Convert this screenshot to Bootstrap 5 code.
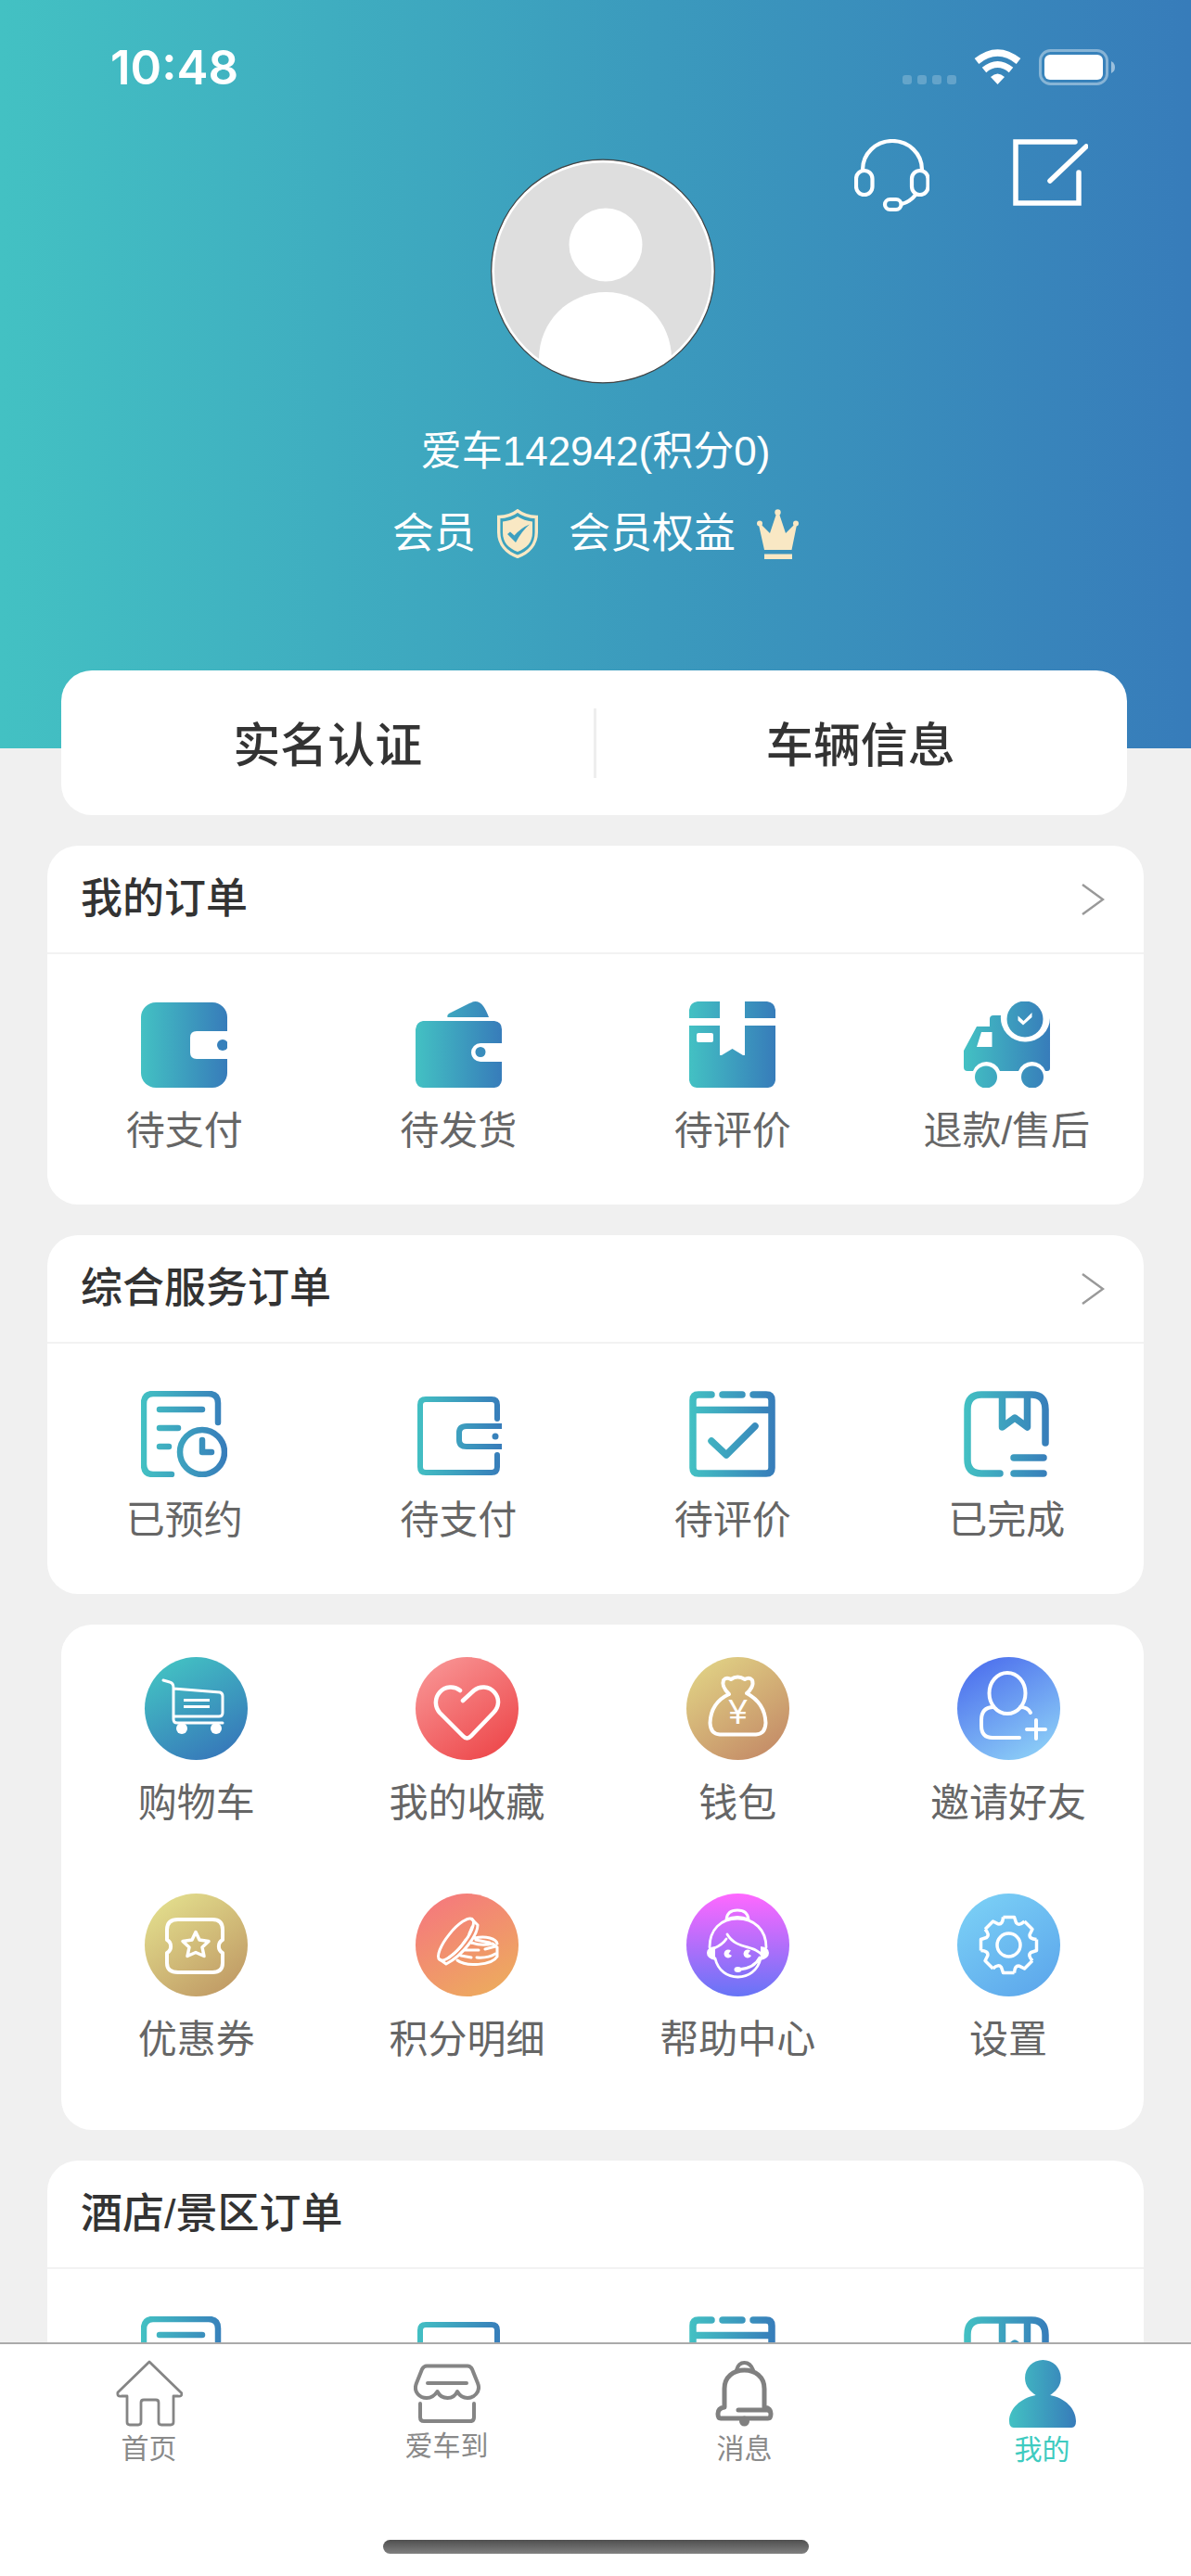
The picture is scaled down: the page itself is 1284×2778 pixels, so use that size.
<!DOCTYPE html>
<html lang="zh-CN">
<head>
<meta charset="utf-8">
<meta name="viewport" content="width=device-width, initial-scale=1">
<title>我的</title>
<link href="https://cdn.jsdelivr.net/npm/bootstrap@5.3.0/dist/css/bootstrap.min.css" rel="stylesheet">
<style>
  body { font-family: "Liberation Sans", "Noto Sans CJK SC", sans-serif; background: #f0f0f0; color: #333; font-weight: 400; }
  a { color: inherit; text-decoration: none; }
  svg { display: block; flex: none; }
  button.plain { border: 0; background: none; padding: 0; color: inherit; }
  main { overflow-y: auto; scrollbar-width: none; }
  main::-webkit-scrollbar { display: none; }

  .hero { background: linear-gradient(90deg, #43c1c3, #3b9abd 55%, #377cba); color: #fff; padding-bottom: 201px; }
  .statusbar { padding: 41px 81px 0 119px; height: 150px; }
  .clock { font: 600 51px/64px Inter, sans-serif; }
  .signal i { width: 10px; height: 10px; border-radius: 3px; background: rgba(255,255,255,.22); }
  .signal { gap: 6px; padding-top: 26px; }
  .tophead { display: grid; grid-template-columns: 1fr auto 1fr; padding: 0 111px 0 127px; }
  .tools { gap: 90px; }
  .avatar { margin-top: 21px; }
  .member-name { font-size: 44px; line-height: 60px; margin-top: 43px; }
  .member-row { font-size: 45px; line-height: 60px; margin-top: 29px; gap: 33px; }
  .member-row a { gap: 23px; }

  .panel { background: #fff; border-radius: 33px; margin: 0 51px 33px; overflow: hidden; }
  .quick { margin: -84px 69px 33px 66px; height: 156px; padding-top: 8px; font-size: 51px; font-weight: 500; }
  .quick a + a::before { content: ""; position: absolute; left: -1px; top: -9px; width: 3px; height: 75px; background: #eee; }
  .quick a { line-height: 64px; }
  .panel-title { height: 117px; padding: 0 42px 0 36px; border-bottom: 2px solid #f2f2f2; font-size: 45px; font-weight: 500; }
  .order-item { padding: 51px 0 49px; font-size: 42px; line-height: 60px; color: #666; gap: 17px; }
  .service-panel { margin-left: 66px; padding: 35px 0; }
  .service-item { font-size: 42px; line-height: 60px; color: #666; gap: 17px; margin-bottom: 67px; }
  .service-panel .service-item.last { margin-bottom: 32px; }
  .disc { border-radius: 50%; width: 111px; height: 111px; }
  .d-cart { background: linear-gradient(150deg, #43c1c3 10%, #377cba 85%); }
  .d-heart { background: linear-gradient(145deg, #f89292 10%, #ee4d50 85%); }
  .d-bag { background: linear-gradient(145deg, #e0d084 10%, #c69069 85%); }
  .d-invite { background: linear-gradient(150deg, #5277ee 15%, #88c8f6 85%); }
  .d-coupon { background: linear-gradient(145deg, #e2dd8c 10%, #c19c66 88%); }
  .d-points { background: linear-gradient(150deg, #f57a7c 10%, #eda95f 88%); }
  .d-help { background: linear-gradient(180deg, #ff68ff, #6674f6); }
  .d-set { background: linear-gradient(145deg, #78ccf5 15%, #5ea9ec 88%); }

  .tabbar { background: #fff; border-top: 2px solid #aaa; }
  .tabbar .nav-link { height: 148px; padding: 0; font-size: 30px; line-height: 36px; color: #8a8a8a; gap: 6px; }
  .tabbar .nav-link.active { color: #3ecbc0; }
  .home-bar { width: 459px; height: 15px; border-radius: 8px; background: linear-gradient(#4f4f4f, #808080); margin: 63px auto 24px; }
</style>
</head>
<body class="d-flex flex-column vh-100 overflow-hidden">

<svg width="0" height="0" class="position-absolute" aria-hidden="true">
  <defs>
    <linearGradient id="brand" gradientUnits="userSpaceOnUse" x1="0" y1="0" x2="93" y2="0"><stop offset="0" stop-color="#43c1c3"/><stop offset="1" stop-color="#377cba"/></linearGradient>
    <symbol id="i-booked" viewBox="0 0 93 93"><g fill="none" stroke="url(#brand)" stroke-width="6.500" stroke-linecap="round" stroke-linejoin="round"><path d="M83 34V13Q83 3 73 3H13Q3 3 3 14V79Q3 90 13 90H33M20 20H66M20 40H40M20 60H30"/><circle cx="66" cy="66" r="24"/><path d="M66 53V66H76"/></g></symbol>
    <symbol id="i-purse" viewBox="0 0 93 93"><g fill="none" stroke="url(#brand)" stroke-width="6" stroke-linecap="round" stroke-linejoin="round"><path d="M88 30V15Q88 9 82 9H11Q5 9 5 15V82Q5 88 11 88H82Q88 88 88 82V69"/><path d="M95 38H55Q47 38 47 45V53Q47 60 55 60H95"/></g><circle cx="86" cy="49" r="3.500" fill="url(#brand)"/></symbol>
    <symbol id="i-rate" viewBox="0 0 93 93"><g fill="none" stroke="url(#brand)" stroke-width="7.500" stroke-linecap="round" stroke-linejoin="round"><path d="M24 4H10Q4 4 4 10V83Q4 89 10 89H83Q89 89 89 83V10Q89 4 83 4H69M36 4H57M4 20.500H89M24 54L40 69L71 38"/></g></symbol>
    <symbol id="i-done" viewBox="0 0 93 93"><g fill="none" stroke="url(#brand)" stroke-width="7.500" stroke-linecap="round" stroke-linejoin="round"><path d="M88 56V20Q88 4 73 4H19Q4 4 4 20V74Q4 89 19 89H39M41.500 4V39L55 29L68.500 39V4M54 72H86M54 89H86"/></g></symbol>
  </defs>
</svg>

<main class="flex-grow-1">
  <header class="hero">
    <div class="statusbar d-flex justify-content-between align-items-start">
      <span class="clock">10:48</span>
      <div class="d-flex align-items-start pt-2">
        <div class="signal d-flex pt-4 mt-2"><i></i><i></i><i></i><i></i></div>
        <svg class="mx-3 mt-1" width="57" height="42" viewBox="-3 -1 57 42" fill="none" stroke="#fff"><path d="M3 12Q25.500-6 48 12" stroke-width="7.500"/><path d="M11 21.500Q25.500 9.500 40 21.500" stroke-width="7"/><path d="M18 29Q25.500 22 33 29L25.500 37Z" fill="#fff" stroke="none"/></svg>
        <svg class="mt-1" width="83" height="40" viewBox="0 0 83 40"><rect x="1.500" y="1.500" width="72" height="36" rx="11" fill="none" stroke="#fff" stroke-opacity=".4" stroke-width="3"/><rect x="6" y="6" width="63" height="27" rx="6" fill="#fff"/><path d="M78 13Q82 15 82 19.500T78 26Z" fill="#fff" fill-opacity=".5"/></svg>
      </div>
    </div>
    <div class="tophead">
      <span></span>
      <a href="#" class="avatar" aria-label="头像">
        <svg width="242" height="243" viewBox="0 0 242 243"><defs><clipPath id="face"><circle cx="121" cy="121.500" r="119.500"/></clipPath></defs><circle cx="121" cy="121.500" r="120" fill="#dedede"/><g clip-path="url(#face)" fill="#fff"><circle cx="124" cy="93" r="39.500"/><path d="M52 243V216C52 176 84 144 124 144S195 176 195 216V243Z"/></g><circle cx="121" cy="121.500" r="118.500" fill="none" stroke="#fff" stroke-width="3"/><circle cx="121" cy="121.500" r="120.300" fill="none" stroke="#444" stroke-width="1.200"/></svg>
      </a>
      <div class="tools d-flex justify-content-end align-items-start">
        <button class="plain" type="button" aria-label="客服"><svg width="81" height="79" viewBox="0 0 81 79" fill="none" stroke="#fff" stroke-width="4.200"><path d="M9 33C9 16 23 2 41 2S73 16 73 33"/><rect x="2" y="34" width="17.500" height="26" rx="8.700"/><rect x="62" y="34" width="17.500" height="26" rx="8.700"/><rect x="33" y="65" width="17.500" height="11" rx="5.500"/><path d="M67 59Q60 68 51 70"/></svg></button>
        <button class="plain" type="button" aria-label="编辑"><svg width="81" height="73" viewBox="0 0 81 73" fill="none" stroke="#fff" stroke-width="5.500" stroke-linecap="round"><path d="M67 3H3V69H71V36M40 45L79 8"/></svg></button>
      </div>
    </div>
    <div class="member-name text-center">爱车142942(积分0)</div>
    <div class="member-row d-flex justify-content-center">
      <a href="#" class="d-flex align-items-center">会员
        <svg width="44" height="54" viewBox="0 0 44 54"><path d="M22 1.800Q30 8 42.300 8.500V25C42.300 38 34 47 22 51.300C10 47 1.700 38 1.700 25V8.500Q14 8 22 1.800Z" fill="none" stroke="#f9e8c4" stroke-width="3.400"/><path d="M22 8Q29 12.500 38 13.500V25C38 36 32 42 22 46C12 42 6 36 6 25V13.500Q15 12.500 22 8Z" fill="#f9e8c4"/><path d="M11 27L14 24.500L18.500 28.500Q26 20 35 16.500Q27 23 20 36Z" fill="#3d9fc0"/></svg></a>
      <a href="#" class="d-flex align-items-center">会员权益
        <svg width="45" height="54" viewBox="0 0 45 54" fill="#f9e8c4"><circle cx="22.500" cy="3.500" r="3.200"/><circle cx="3" cy="15.500" r="3"/><circle cx="42" cy="15.500" r="3"/><path d="M2 17L5 17L14 26L21 5H24L31 26L40 17L43 17L37.500 44H8Z"/><path d="M8 48.500H38V54H8Z"/></svg></a>
    </div>
  </header>

  <nav class="panel quick position-relative d-flex align-items-center">
    <a href="#" class="flex-fill w-50 text-center">实名认证</a>
    <a href="#" class="flex-fill w-50 text-center position-relative">车辆信息</a>
  </nav>

  <section class="panel">
    <a href="#" class="panel-title d-flex justify-content-between align-items-center">我的订单
      <svg width="25" height="36" viewBox="0 0 25 36" fill="none" stroke="#999" stroke-width="2.500"><path d="M1 2L23 18L1 34"/></svg></a>
    <div class="row g-0">
      <a href="#" class="order-item col-3 d-flex flex-column align-items-center">
        <svg width="93" height="93" viewBox="0 0 93 93"><rect y="1" width="93" height="92" rx="16" fill="url(#brand)"/><path d="M94 32H60Q53 32 53 39V55Q53 62 60 62H94Z" fill="#fff"/><circle cx="88" cy="47" r="6" fill="#3680bb"/></svg>待支付</a>
      <a href="#" class="order-item col-3 d-flex flex-column align-items-center">
        <svg width="93" height="93" viewBox="0 0 93 93"><path d="M35 17Q33 16 36 13L58 2Q67-3 73 5Q76 9 79 17ZM8 21H85Q93 22 93 30V85Q92 92 85 93H8Q1 92 0 85V30Q1 22 8 21Z" fill="url(#brand)"/><path d="M94 45H70A10 10 0 0 0 70 65H94Z" fill="#fff"/><circle cx="70" cy="54.500" r="5.500" fill="#398dbc"/></svg>待发货</a>
      <a href="#" class="order-item col-3 d-flex flex-column align-items-center">
        <svg width="93" height="93" viewBox="0 0 93 93" fill="url(#brand)"><path fill-rule="evenodd" d="M0 18V9Q1 1 9 0H33V18ZM60 0H84Q92 1 93 9V18H60ZM0 26H33V58H35L46.500 51L58 58H60V26H93V85Q92 92 85 93H8Q1 92 0 85ZM10 34Q8 34 8 36V42Q8 44 10 44H24Q26 44 26 42V36Q26 34 24 34Z"/></svg>待评价</a>
      <a href="#" class="order-item col-3 d-flex flex-column align-items-center">
        <svg width="93" height="93" viewBox="0 0 93 93" fill="url(#brand)"><path fill-rule="evenodd" d="M0 53L14 27H28V19Q28 15 32 15H40A26 26 0 0 0 66 43.500A26 26 0 0 0 93 17V72Q93 75 90 75H88A15.500 15.500 0 0 0 59 75H39A15.500 15.500 0 0 0 10 75H4Q0 75 0 71ZM19 33L14 49H30.500V33Z"/><circle cx="66" cy="19" r="19.500"/><circle cx="24" cy="81.500" r="12"/><circle cx="74" cy="81.500" r="12"/><path d="M58.500 15.500L64.500 21L73.500 12V17L64 25.500L58.500 20.500Z" fill="#fff"/></svg>退款/售后</a>
    </div>
  </section>

  <section class="panel">
    <a href="#" class="panel-title d-flex justify-content-between align-items-center">综合服务订单
      <svg width="25" height="36" viewBox="0 0 25 36" fill="none" stroke="#999" stroke-width="2.500"><path d="M1 2L23 18L1 34"/></svg></a>
    <div class="row g-0">
      <a href="#" class="order-item col-3 d-flex flex-column align-items-center"><svg width="93" height="93"><use href="#i-booked"/></svg>已预约</a>
      <a href="#" class="order-item col-3 d-flex flex-column align-items-center"><svg width="93" height="93"><use href="#i-purse"/></svg>待支付</a>
      <a href="#" class="order-item col-3 d-flex flex-column align-items-center"><svg width="93" height="93"><use href="#i-rate"/></svg>待评价</a>
      <a href="#" class="order-item col-3 d-flex flex-column align-items-center"><svg width="93" height="93"><use href="#i-done"/></svg>已完成</a>
    </div>
  </section>

  <section class="panel service-panel">
    <div class="row g-0">
      <a href="#" class="service-item col-3 d-flex flex-column align-items-center">
        <span class="disc d-cart"><svg width="111" height="111" viewBox="0 0 111 111" fill="none" stroke="#fff" stroke-width="3" stroke-linecap="round" stroke-linejoin="round"><path d="M20 25L27 27Q31 28 31 33V67Q31 71 35 71H84M31 34L81 38Q84 39 84 42V60Q84 64 80 64H31"/><path d="M42 46.500H70M42 53.500H70" stroke-linecap="butt"/><g fill="#fff" stroke="none"><circle cx="40" cy="77" r="6"/><circle cx="77" cy="77" r="6"/></g></svg></span>购物车</a>
      <a href="#" class="service-item col-3 d-flex flex-column align-items-center">
        <span class="disc d-heart"><svg width="111" height="111" viewBox="0 0 111 111" fill="none" stroke="#fff" stroke-width="4.500" stroke-linecap="round" stroke-linejoin="round"><path d="M48 36C42 31 32 31 26 38C20 45 21 54 26 60L51 85Q55.500 90 60 85L84 60C90 54 91 45 85 38C79 31 69 31 63 36L51 47"/></svg></span>我的收藏</a>
      <a href="#" class="service-item col-3 d-flex flex-column align-items-center">
        <span class="disc d-bag"><svg width="111" height="111" viewBox="0 0 111 111"><path d="M46 40C42 36 38 30 40 25Q43 21 48 24Q55 19 63 24Q68 21 71 25C73 30 69 36 65 39M46 40C33 46 26 57 25.500 71Q26 83 36 83.500H75Q85 83 85.500 71C85 57 78 46 65 39" fill="none" stroke="#fff" stroke-width="4" stroke-linecap="round" stroke-linejoin="round"/><text x="55.500" y="72" text-anchor="middle" font-size="36" font-weight="400" font-family="Liberation Sans, sans-serif" fill="#fff">¥</text></svg></span>钱包</a>
      <a href="#" class="service-item col-3 d-flex flex-column align-items-center">
        <span class="disc d-invite"><svg width="111" height="111" viewBox="0 0 111 111" fill="none" stroke="#fff" stroke-width="4" stroke-linecap="round" stroke-linejoin="round"><ellipse cx="54" cy="39" rx="19.500" ry="22"/><path d="M39 54Q26 54 26 68V74Q26 87 38 87H67M68 54Q76 54 79 60M85 68V88M75 78H95"/></svg></span>邀请好友</a>
      <a href="#" class="service-item last col-3 d-flex flex-column align-items-center">
        <span class="disc d-coupon"><svg width="111" height="111" viewBox="0 0 111 111" fill="none" stroke="#fff" stroke-linejoin="round"><path stroke-width="4" d="M36 28H73Q84 28 84 39V50A8 8 0 0 0 84 64V75Q84 85 73 85H36Q24 85 24 75V64A8 8 0 0 0 24 50V39Q24 28 36 28Z"/><path stroke-width="3.500" d="M55 41.500L59 50L69 51.500L62 58L64 67.500L55 63.500L46 67.500L48 58L41 51.500L51 50Z"/></svg></span>优惠券</a>
      <a href="#" class="service-item last col-3 d-flex flex-column align-items-center">
        <span class="disc d-points"><svg width="111" height="111" viewBox="0 0 111 111" fill="none" stroke="#fff" stroke-width="3" stroke-linecap="round" stroke-linejoin="round"><ellipse cx="43.500" cy="49.500" rx="28" ry="9" transform="rotate(-51 43.500 49.500)"/><path d="M61 28L67 34C67 44 52 66 33 76L26 71M61 36L58 43M54 50C49 58 42 65 36 69M64 48C76 45 87 49 88 54M65 50L80 53M60 53Q72 57 83 54L88 58V68C82 78 54 79 45 72M54 61H68M75 60L86 57M49 67L60 69M66 69Q78 70 86 65"/></svg></span>积分明细</a>
      <a href="#" class="service-item last col-3 d-flex flex-column align-items-center">
        <span class="disc d-help"><svg width="111" height="111" viewBox="0 0 111 111" fill="none" stroke="#fff" stroke-width="2.800" stroke-linecap="round"><path d="M43 28Q44 18 55 18T67 28Q55 23 43 28M25 58C25 39 37 27 55 27S86 39 86 58M30 59Q39 55 43 49M44 44C54 61 74 55 82 67M31 70C34 83 44 90 55.500 90S77 83 80 70M56 82Q73 81 79 69"/><g fill="#fff" stroke="none"><path d="M31 57Q22 58 22 64T31 72ZM80 57Q89 58 89 64T80 72Z"/><path d="M48 61.500A4.500 4.500 0 1 0 49 67L45.500 65ZM69 61.500A4.500 4.500 0 1 0 70 67L66.500 65Z"/><ellipse cx="55.500" cy="82" rx="4" ry="3"/></g></svg></span>帮助中心</a>
      <a href="#" class="service-item last col-3 d-flex flex-column align-items-center">
        <span class="disc d-set"><svg width="111" height="111" viewBox="-55.500 -55.500 111 111" fill="none" stroke="#fff" stroke-width="3.500" stroke-linejoin="round"><defs><path id="tooth" d="M-6 -30H6L8 -24Q11 -20 17 -25.500"/></defs><use href="#tooth"/><use href="#tooth" transform="rotate(45)"/><use href="#tooth" transform="rotate(90)"/><use href="#tooth" transform="rotate(135)"/><use href="#tooth" transform="rotate(180)"/><use href="#tooth" transform="rotate(225)"/><use href="#tooth" transform="rotate(270)"/><use href="#tooth" transform="rotate(315)"/><circle r="12.500"/></svg></span>设置</a>
    </div>
  </section>

  <section class="panel">
    <a href="#" class="panel-title d-flex justify-content-between align-items-center">酒店/景区订单</a>
    <div class="row g-0">
      <a href="#" aria-label="已预约" class="order-item col-3 d-flex flex-column align-items-center"><svg width="93" height="93"><use href="#i-booked"/></svg></a>
      <a href="#" aria-label="待支付" class="order-item col-3 d-flex flex-column align-items-center"><svg width="93" height="93"><use href="#i-purse"/></svg></a>
      <a href="#" aria-label="待评价" class="order-item col-3 d-flex flex-column align-items-center"><svg width="93" height="93"><use href="#i-rate"/></svg></a>
      <a href="#" aria-label="已完成" class="order-item col-3 d-flex flex-column align-items-center"><svg width="93" height="93"><use href="#i-done"/></svg></a>
    </div>
  </section>
</main>

<footer class="tabbar flex-shrink-0">
  <nav class="nav nav-fill">
    <a href="#" class="nav-link w-25 d-flex flex-column align-items-center justify-content-center">
      <svg width="72" height="72" viewBox="0 0 72 72" fill="none" stroke="#858585" stroke-width="2.800" stroke-linejoin="round"><path d="M36 2L2 35Q1 40 6 39H12V67Q12 70 15 70H24Q27 70 27 67V46Q27 43 30 43H43Q46 43 46 46V67Q46 70 49 70H59Q62 70 62 67V39H67Q71 40 71 36Z"/></svg>首页</a>
    <a href="#" class="nav-link w-25 d-flex flex-column align-items-center justify-content-center">
      <svg width="72" height="65" viewBox="0 0 72 65" fill="none" stroke="#858585" stroke-width="4" stroke-linecap="round" stroke-linejoin="round"><path d="M14 2.500H58Q61 2.500 63 6L69 21C73 31 64 37 58 37Q51 37 47 30Q44 37 36.500 37T25.500 30Q21 37 14 37C7 37-1 31 3 21L9 6Q11 2.500 14 2.500ZM15 21H57M7 43V58Q7 62 11 62H61Q65 62 65 58V43"/></svg>爱车到</a>
    <a href="#" class="nav-link w-25 d-flex flex-column align-items-center justify-content-center">
      <svg width="64" height="72" viewBox="0 0 64 72" fill="none" stroke="#808080" stroke-width="5" stroke-linecap="round" stroke-linejoin="round"><path d="M25 54H56Q60 54 60 58Q60 63 57 63H6Q3 63 3 58Q3 52 10 51V31C10 18 20 11 31.500 11S53 18 53 31V51Q60 52 60 58"/><path d="M23 11Q25 3 31.500 3T41 11" stroke-width="4"/><circle cx="31.500" cy="66" r="5.500" fill="#808080" stroke="none"/></svg>消息</a>
    <a href="#" class="nav-link active w-25 d-flex flex-column align-items-center justify-content-center" aria-current="page">
      <svg width="72" height="73" viewBox="0 0 93 94" fill="url(#brand)"><path d="M47 0C61 0 72 11 72 25C72 37 64 44 57 49C78 53 93 68 93 85Q93 94 87 94H6Q0 94 0 85C0 68 16 53 37 49C30 44 22 37 22 25C22 11 33 0 47 0Z"/></svg>我的</a>
  </nav>
  <div class="home-bar"></div>
</footer>

<script src="https://cdn.jsdelivr.net/npm/bootstrap@5.3.0/dist/js/bootstrap.bundle.min.js"></script>
</body>
</html>
